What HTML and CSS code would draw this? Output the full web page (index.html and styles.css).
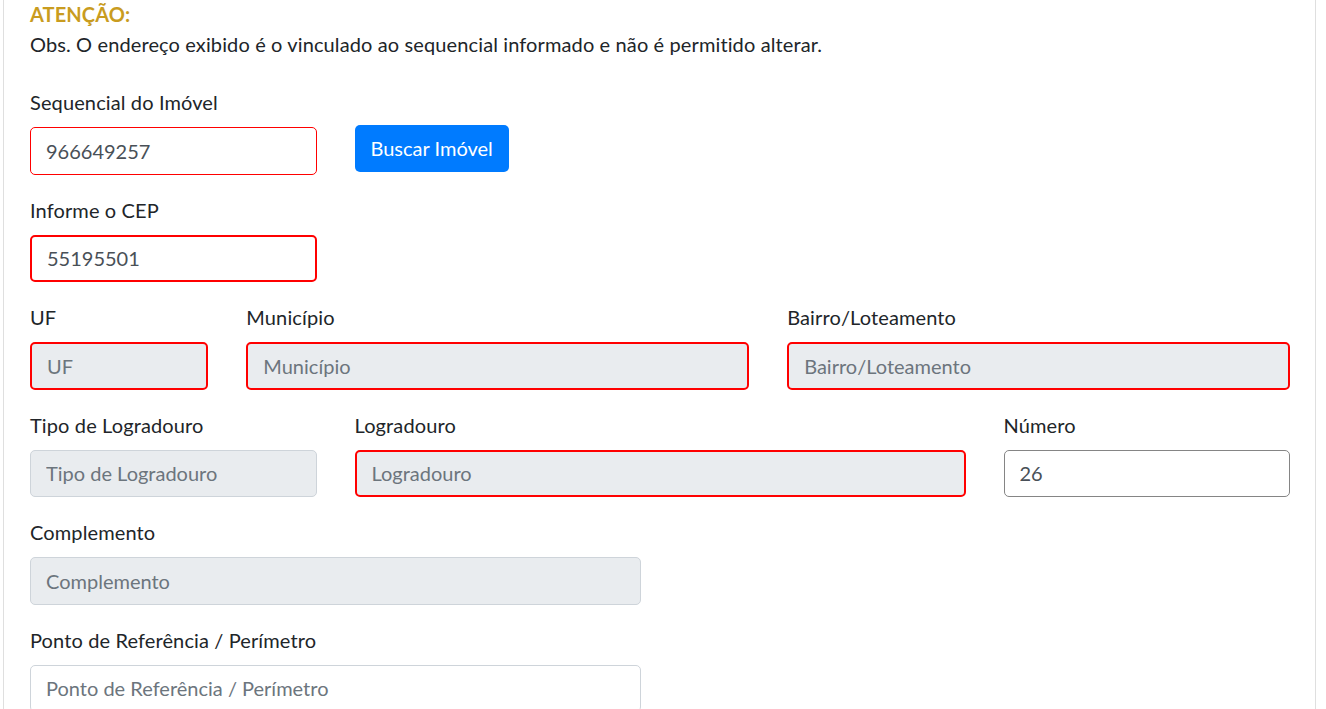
FILE: index.html
```html
<!DOCTYPE html>
<html lang="pt-BR">
<head>
<meta charset="UTF-8">
<meta name="viewport" content="width=device-width, initial-scale=1.0">
<title>Endereço do Imóvel</title>
<link rel="stylesheet" href="styles.css">
</head>
<body>

<div class="card">
  <p class="alert-title">ATENÇÃO:</p>
  <p class="alert-note">Obs. O endereço exibido é o vinculado ao sequencial informado e não é permitido alterar.</p>

  <div class="form-row">
    <div class="field col-3">
      <label for="sequencial">Sequencial do Imóvel</label>
      <input id="sequencial" class="form-control invalid" type="text" value="966649257">
    </div>
    <div class="field col-3">
      <button class="btn-primary" type="button">Buscar Imóvel</button>
    </div>
  </div>

  <div class="form-row">
    <div class="field col-3">
      <label for="cep">Informe o CEP</label>
      <input id="cep" class="form-control invalid strong" type="text" value="55195501">
    </div>
  </div>

  <div class="form-row">
    <div class="field col-2">
      <label for="uf">UF</label>
      <input id="uf" class="form-control invalid strong" type="text" placeholder="UF" disabled>
    </div>
    <div class="field col-5">
      <label for="municipio">Município</label>
      <input id="municipio" class="form-control invalid strong" type="text" placeholder="Município" disabled>
    </div>
    <div class="field col-5">
      <label for="bairro">Bairro/Loteamento</label>
      <input id="bairro" class="form-control invalid strong" type="text" placeholder="Bairro/Loteamento" disabled>
    </div>
  </div>

  <div class="form-row">
    <div class="field col-3">
      <label for="tipo">Tipo de Logradouro</label>
      <input id="tipo" class="form-control" type="text" placeholder="Tipo de Logradouro" disabled>
    </div>
    <div class="field col-6">
      <label for="logradouro">Logradouro</label>
      <input id="logradouro" class="form-control invalid strong" type="text" placeholder="Logradouro" disabled>
    </div>
    <div class="field col-3">
      <label for="numero">Número</label>
      <input id="numero" class="form-control hovered" type="text" value="26">
    </div>
  </div>

  <div class="form-row">
    <div class="field col-6">
      <label for="complemento">Complemento</label>
      <input id="complemento" class="form-control" type="text" placeholder="Complemento" disabled>
    </div>
  </div>

  <div class="form-row">
    <div class="field col-6">
      <label for="referencia">Ponto de Referência / Perímetro</label>
      <input id="referencia" class="form-control" type="text" placeholder="Ponto de Referência / Perímetro">
    </div>
  </div>
</div>

</body>
</html>
```

FILE: styles.css
```css
html, body {
  margin: 0;
  background-color: #fff;
}
body {
  padding-left: 3px;
  font-family: Lato, "Liberation Sans", sans-serif;
  font-size: 20px;
  line-height: 30px;
  letter-spacing: 0.12px;
  color: #212529;
}
.card {
  width: 1260px;
  padding: 0 25px 0 26px;
  border-left: 1px solid #dfdfdf;
  border-right: 1px solid #dfdfdf;
  min-height: 100vh;
}
.alert-title {
  margin: 0;
  line-height: 29px;
  font-weight: 700;
  color: #c99c1f;
}
.alert-note {
  margin: 0 0 28px;
}
.form-row {
  display: grid;
  grid-template-columns: repeat(12, 1fr);
  column-gap: 38px;
  margin-bottom: 20px;
}
.col-2 { grid-column: span 2; }
.col-3 { grid-column: span 3; }
.col-5 { grid-column: span 5; }
.col-6 { grid-column: span 6; }
.field label {
  display: block;
  margin-bottom: 10px;
}
.form-control {
  display: block;
  box-sizing: border-box;
  width: 100%;
  height: 47.5px;
  margin: 0;
  padding: 0 15px;
  border: 1px solid #ced4da;
  border-radius: 5px;
  background-color: #fff;
  font: inherit;
  color: #495057;
  outline: none;
}
.form-control::placeholder {
  color: #6c757d;
  opacity: 1;
}
.form-control:disabled {
  background-color: #e9ecef;
}
.form-control.invalid { border-color: #ff0000; }
.form-control.strong { border-width: 2px; }
.form-control.hovered { border-color: #858585; }
.btn-primary {
  margin-top: 37.5px;
  height: 47px;
  padding: 0 16px;
  border: none;
  border-radius: 5px;
  background-color: #007bff;
  color: #fff;
  font: inherit;
  cursor: pointer;
}
.btn-primary:hover {
  background-color: #0069d9;
}
```
